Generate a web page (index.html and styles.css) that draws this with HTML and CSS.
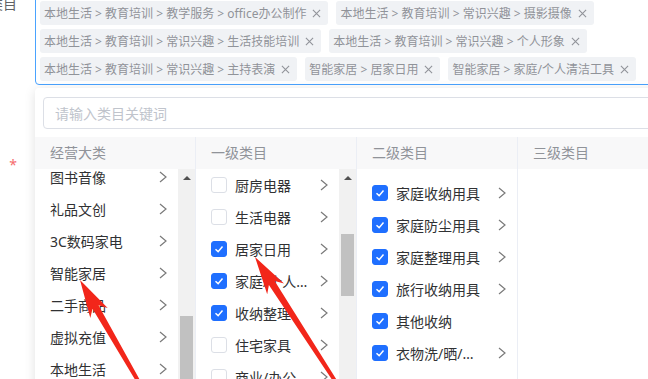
FILE: index.html
```html
<!DOCTYPE html>
<html lang="zh-CN">
<head>
<meta charset="utf-8">
<title>类目选择</title>
<link rel="stylesheet" href="styles.css">
</head>
<body>
<div class="form">
  <div class="form-item">
    <div class="label">类目</div>
    <div class="select">
      <div class="tags">
        <span class="tag">本地生活 &gt; 教育培训 &gt; 教学服务 &gt; office办公制作<svg class="x" viewBox="0 0 10 10"><path d="M1 1L9 9M9 1L1 9"/></svg></span>
        <span class="tag">本地生活 &gt; 教育培训 &gt; 常识兴趣 &gt; 摄影摄像<svg class="x" viewBox="0 0 10 10"><path d="M1 1L9 9M9 1L1 9"/></svg></span>
        <span class="tag">本地生活 &gt; 教育培训 &gt; 常识兴趣 &gt; 生活技能培训<svg class="x" viewBox="0 0 10 10"><path d="M1 1L9 9M9 1L1 9"/></svg></span>
        <span class="tag">本地生活 &gt; 教育培训 &gt; 常识兴趣 &gt; 个人形象<svg class="x" viewBox="0 0 10 10"><path d="M1 1L9 9M9 1L1 9"/></svg></span>
        <span class="tag">本地生活 &gt; 教育培训 &gt; 常识兴趣 &gt; 主持表演<svg class="x" viewBox="0 0 10 10"><path d="M1 1L9 9M9 1L1 9"/></svg></span>
        <span class="tag">智能家居 &gt; 居家日用<svg class="x" viewBox="0 0 10 10"><path d="M1 1L9 9M9 1L1 9"/></svg></span>
        <span class="tag">智能家居 &gt; 家庭/个人清洁工具<svg class="x" viewBox="0 0 10 10"><path d="M1 1L9 9M9 1L1 9"/></svg></span>
      </div>

      <div class="dropdown">
        <input class="search" type="text" placeholder="请输入类目关键词">
        <div class="cols">
          <div class="col">
            <div class="col-head">经营大类</div>
            <div class="col-body">
              <div class="list list-up">
                <div class="item"><span class="txt">图书音像</span><svg class="chev" viewBox="0 0 8 12"><polyline points="1,1 7,6 1,11"/></svg></div>
                <div class="item"><span class="txt">礼品文创</span><svg class="chev" viewBox="0 0 8 12"><polyline points="1,1 7,6 1,11"/></svg></div>
                <div class="item"><span class="txt">3C数码家电</span><svg class="chev" viewBox="0 0 8 12"><polyline points="1,1 7,6 1,11"/></svg></div>
                <div class="item"><span class="txt">智能家居</span><svg class="chev" viewBox="0 0 8 12"><polyline points="1,1 7,6 1,11"/></svg></div>
                <div class="item"><span class="txt">二手商品</span><svg class="chev" viewBox="0 0 8 12"><polyline points="1,1 7,6 1,11"/></svg></div>
                <div class="item"><span class="txt">虚拟充值</span><svg class="chev" viewBox="0 0 8 12"><polyline points="1,1 7,6 1,11"/></svg></div>
                <div class="item"><span class="txt">本地生活</span><svg class="chev" viewBox="0 0 8 12"><polyline points="1,1 7,6 1,11"/></svg></div>
              </div>
              <div class="scrollbar">
                <div class="sb-btn"><span class="sb-tri"></span></div>
                <div class="sb-thumb thumb-1"></div>
              </div>
            </div>
          </div>

          <div class="col">
            <div class="col-head">一级类目</div>
            <div class="col-body">
              <div class="list">
                <div class="item"><span class="cb"></span><span class="txt">厨房电器</span><svg class="chev" viewBox="0 0 8 12"><polyline points="1,1 7,6 1,11"/></svg></div>
                <div class="item"><span class="cb"></span><span class="txt">生活电器</span><svg class="chev" viewBox="0 0 8 12"><polyline points="1,1 7,6 1,11"/></svg></div>
                <div class="item"><span class="cb on"><svg viewBox="0 0 16 16"><polyline points="4,8.3 7,11 12,5.2"/></svg></span><span class="txt">居家日用</span><svg class="chev" viewBox="0 0 8 12"><polyline points="1,1 7,6 1,11"/></svg></div>
                <div class="item"><span class="cb on"><svg viewBox="0 0 16 16"><polyline points="4,8.3 7,11 12,5.2"/></svg></span><span class="txt">家庭/个人清洁工具</span><svg class="chev" viewBox="0 0 8 12"><polyline points="1,1 7,6 1,11"/></svg></div>
                <div class="item"><span class="cb on"><svg viewBox="0 0 16 16"><polyline points="4,8.3 7,11 12,5.2"/></svg></span><span class="txt">收纳整理</span><svg class="chev" viewBox="0 0 8 12"><polyline points="1,1 7,6 1,11"/></svg></div>
                <div class="item"><span class="cb"></span><span class="txt">住宅家具</span><svg class="chev" viewBox="0 0 8 12"><polyline points="1,1 7,6 1,11"/></svg></div>
                <div class="item"><span class="cb"></span><span class="txt">商业/办公家具</span><svg class="chev" viewBox="0 0 8 12"><polyline points="1,1 7,6 1,11"/></svg></div>
              </div>
              <div class="scrollbar">
                <div class="sb-btn"><span class="sb-tri"></span></div>
                <div class="sb-thumb thumb-2"></div>
              </div>
            </div>
          </div>

          <div class="col">
            <div class="col-head">二级类目</div>
            <div class="col-body">
              <div class="list list-down list-wide">
                <div class="item"><span class="cb on"><svg viewBox="0 0 16 16"><polyline points="4,8.3 7,11 12,5.2"/></svg></span><span class="txt">家庭收纳用具</span><svg class="chev" viewBox="0 0 8 12"><polyline points="1,1 7,6 1,11"/></svg></div>
                <div class="item"><span class="cb on"><svg viewBox="0 0 16 16"><polyline points="4,8.3 7,11 12,5.2"/></svg></span><span class="txt">家庭防尘用具</span><svg class="chev" viewBox="0 0 8 12"><polyline points="1,1 7,6 1,11"/></svg></div>
                <div class="item"><span class="cb on"><svg viewBox="0 0 16 16"><polyline points="4,8.3 7,11 12,5.2"/></svg></span><span class="txt">家庭整理用具</span><svg class="chev" viewBox="0 0 8 12"><polyline points="1,1 7,6 1,11"/></svg></div>
                <div class="item"><span class="cb on"><svg viewBox="0 0 16 16"><polyline points="4,8.3 7,11 12,5.2"/></svg></span><span class="txt">旅行收纳用具</span><svg class="chev" viewBox="0 0 8 12"><polyline points="1,1 7,6 1,11"/></svg></div>
                <div class="item"><span class="cb on"><svg viewBox="0 0 16 16"><polyline points="4,8.3 7,11 12,5.2"/></svg></span><span class="txt">其他收纳</span></div>
                <div class="item"><span class="cb on"><svg viewBox="0 0 16 16"><polyline points="4,8.3 7,11 12,5.2"/></svg></span><span class="txt">衣物洗/晒/烫护理</span><svg class="chev" viewBox="0 0 8 12"><polyline points="1,1 7,6 1,11"/></svg></div>
              </div>
            </div>
          </div>

          <div class="col col-last">
            <div class="col-head">三级类目</div>
            <div class="col-body"></div>
          </div>
        </div>
      </div>
    </div>
  </div>

  <div class="form-item item-2">
    <div class="label req">*</div>
  </div>
</div>

<svg class="marks" viewBox="0 0 648 379">
  <polygon points="80,280 107.7,308 98.5,305.2 144.1,387.6 140.9,389.4 92.5,308.7 90.3,318"/>
  <polygon points="255,257 284,283.5 274.7,281.1 338,382 334.9,384 268.9,284.9 267.2,294.3"/>
</svg>
</body>
</html>
```

FILE: styles.css
```css
html, body {
  margin: 0;
  padding: 0;
}

body {
  width: 648px;
  height: 379px;
  overflow: hidden;
  position: relative;
  background: #fff;
  font-family: "Noto Sans", "Noto Sans CJK SC", sans-serif;
  color: #303133;
}

.form {
  margin-left: -25px;
  margin-top: -4px;
}

.form-item {
  display: flex;
  align-items: flex-start;
}

.label {
  width: 60px;
  flex-shrink: 0;
  box-sizing: border-box;
  padding-right: 18px;
  text-align: right;
  white-space: nowrap;
  font-size: 14px;
  line-height: 16px;
  color: #606266;
}

.item-2 {
  margin-top: 72px;
}

.req {
  color: #f56c6c;
}

.select {
  position: relative;
  width: 640px;
  flex-shrink: 0;
  border: 1px solid #4aa3ff;
  border-radius: 4px;
  padding: 4px 4px 3px;
  box-sizing: border-box;
  background: #fff;
}

.tags {
  display: flex;
  flex-wrap: wrap;
  gap: 4px 8px;
}

.tag {
  display: inline-flex;
  align-items: center;
  height: 24px;
  padding: 0 7px 0 4px;
  box-sizing: border-box;
  background: #f0f2f5;
  border-radius: 3px;
  font-size: 12px;
  color: #909399;
  white-space: pre;
}

.tag .x {
  width: 9px;
  height: 9px;
  margin-left: 6px;
  fill: none;
  stroke: #909399;
  stroke-width: 1.2;
}

.dropdown {
  position: absolute;
  top: calc(100% + 4px);
  left: -1px;
  width: 680px;
  background: #fff;
  border-radius: 4px;
  box-shadow: 0 2px 12px rgba(0, 0, 0, 0.12);
  padding-top: 9px;
  z-index: 5;
}

.search {
  display: block;
  margin: 0 8px 8px;
  width: 664px;
  height: 32px;
  box-sizing: border-box;
  border: 1px solid #dcdfe6;
  border-radius: 4px;
  padding: 0 11px;
  font-family: "Noto Sans", "Noto Sans CJK SC", sans-serif;
  font-size: 14px;
  color: #606266;
  outline: none;
}

.search::placeholder {
  color: #c0c4cc;
}

.cols {
  display: flex;
  height: 300px;
}

.col {
  width: 161px;
  flex-shrink: 0;
  box-sizing: border-box;
  border-right: 1px solid #ebeef5;
  display: flex;
  flex-direction: column;
}

.col-last {
  flex: 1;
  border-right: none;
}

.col-head {
  height: 32px;
  line-height: 32px;
  padding-left: 15px;
  background: #f8f8f9;
  font-size: 14px;
  color: #909399;
}

.col-body {
  flex: 1;
  display: flex;
  overflow: hidden;
}

.list {
  flex: 1;
  min-width: 0;
}

.list-up {
  margin-top: -8px;
}

.list-down {
  padding-top: 8px;
}

.item {
  display: flex;
  align-items: center;
  height: 32px;
  padding: 0 11px 0 15px;
  font-size: 14px;
  color: #303133;
}

.txt {
  max-width: 80px;
  overflow: hidden;
  white-space: nowrap;
  text-overflow: ellipsis;
}

.list-wide .txt {
  max-width: 86px;
}

.chev {
  width: 8px;
  height: 12px;
  margin-left: auto;
  flex-shrink: 0;
  fill: none;
  stroke: #7a7a7a;
  stroke-width: 1.2;
}

.cb {
  width: 16px;
  height: 16px;
  flex-shrink: 0;
  box-sizing: border-box;
  border: 1px solid #dcdfe6;
  border-radius: 3px;
  margin-right: 8px;
  background: #fff;
  display: flex;
}

.cb.on {
  background: #1f6fff;
  border-color: #1f6fff;
}

.cb svg {
  width: 14px;
  height: 14px;
  fill: none;
  stroke: #fff;
  stroke-width: 1.7;
}

.scrollbar {
  width: 17px;
  flex-shrink: 0;
  background: #f1f1f1;
  display: flex;
  flex-direction: column;
}

.sb-btn {
  height: 17px;
  display: flex;
  align-items: center;
  justify-content: center;
}

.sb-tri {
  width: 0;
  height: 0;
  border-left: 4px solid transparent;
  border-right: 4px solid transparent;
  border-bottom: 4px solid #505050;
}

.sb-thumb {
  margin: 0 2px;
  background: #c1c1c1;
}

.thumb-1 {
  margin-top: 130px;
  height: 120px;
}

.thumb-2 {
  margin-top: 48px;
  height: 62px;
}

.marks {
  position: absolute;
  left: 0;
  top: 0;
  width: 648px;
  height: 379px;
  pointer-events: none;
  z-index: 10;
}

.marks polygon {
  fill: #f2261a;
}
```
